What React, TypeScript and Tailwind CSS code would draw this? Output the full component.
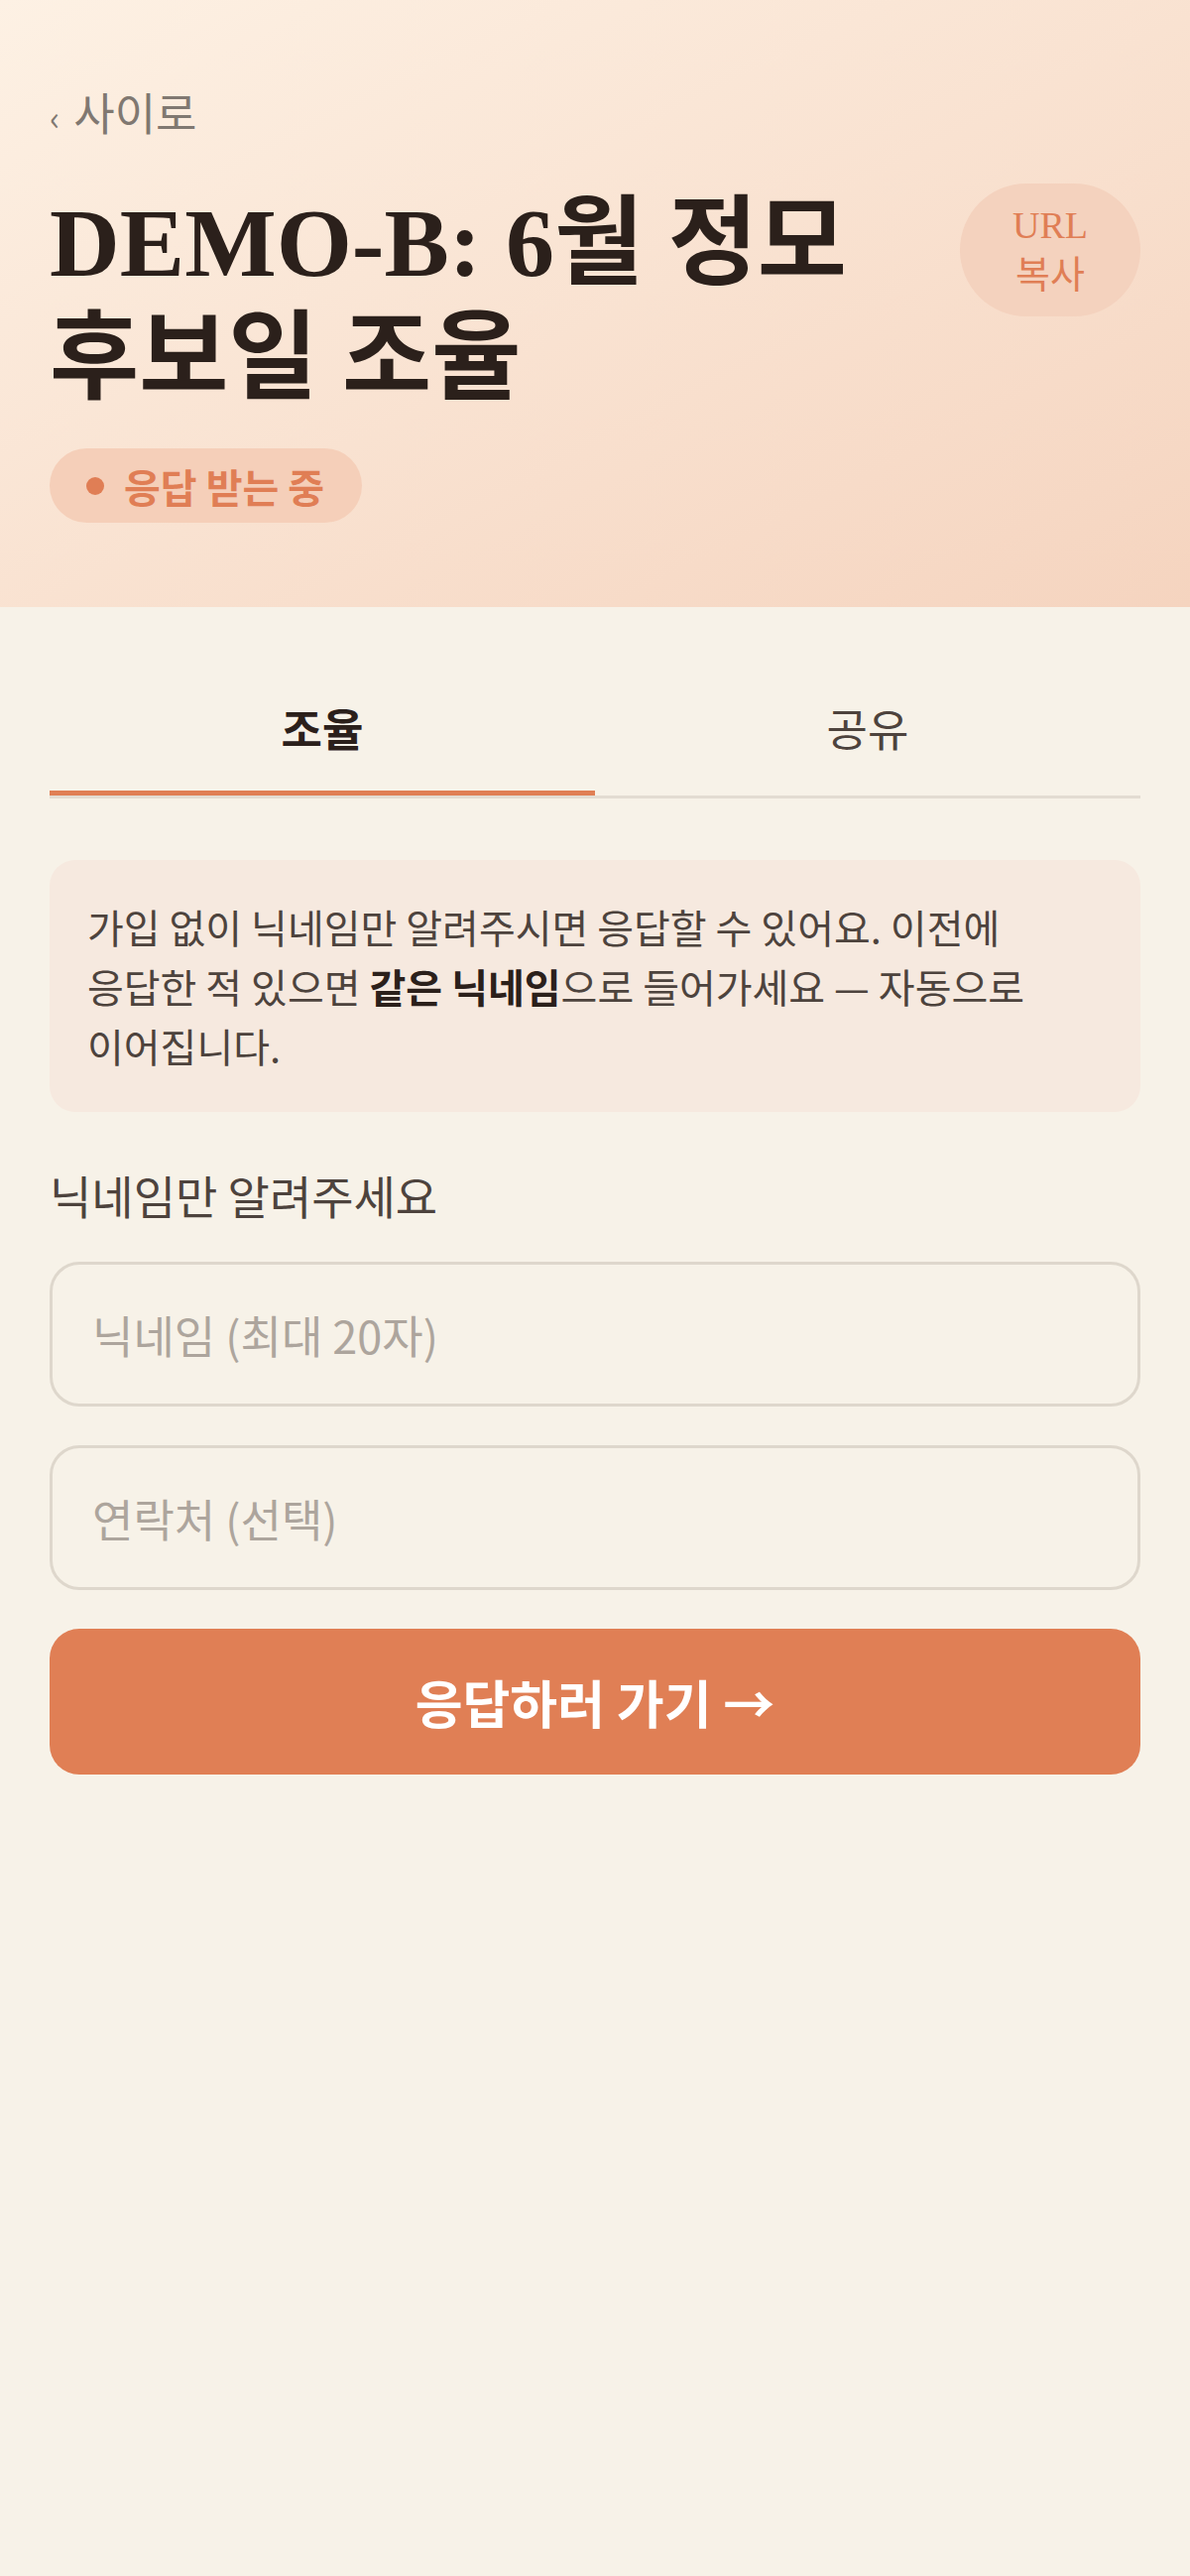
import { useState } from "react";

const serif = "font-['Liberation_Serif','Noto_Sans_CJK_KR',serif]";
const sans = "font-['Noto_Sans_CJK_KR','Noto_Sans',sans-serif]";

export default function App() {
  const [tab, setTab] = useState<"schedule" | "share">("schedule");
  const [nickname, setNickname] = useState("");
  const [contact, setContact] = useState("");

  return (
    <div className={`min-h-screen bg-[#f7f2e8] ${sans}`}>
      {/* header */}
      <header className="bg-linear-to-br from-[#fdf1e4] to-[#f5d4bf] px-[50px] pt-[85px] pb-[85px]">
        <a href="#" className="flex items-center gap-[14px] text-[45px] leading-[56px] text-[#807871]">
          <span className="mt-[10px] text-[34px] leading-none">‹</span>
          <span>사이로</span>
        </a>

        <div className="mt-[46px] flex items-start justify-between gap-[40px]">
          <h1 className={`${serif} text-[98px] font-bold leading-[116px] text-[#2b201b] break-keep`}>
            DEMO-B: 6월 정모 후보일 조율
          </h1>
          <button className={`${serif} mt-[-2px] flex h-[134px] w-[182px] shrink-0 items-center justify-center rounded-full bg-[#f4d2be] px-[40px] text-center text-[38px] leading-[50px] text-[#e07e55]`}>
            URL 복사
          </button>
        </div>

        <div className="mt-[33px] inline-flex h-[75px] items-center gap-[20px] rounded-full bg-[#f5cfb9] pl-[37px] pr-[38px]">
          <span className="h-[18px] w-[18px] rounded-full bg-[#e07e55]" />
          <span className="text-[40px] font-bold text-[#e07e55]">응답 받는 중</span>
        </div>
      </header>

      <main className="px-[50px] pt-[97px] pb-[80px]">
        {/* tabs */}
        <div className="grid grid-cols-2 border-b-[3px] border-[#e3dcd2]">
          <button
            onClick={() => setTab("schedule")}
            className={`border-b-[5px] pb-[38px] text-[45px] leading-[50px] ${
              tab === "schedule" ? "border-[#e07f55] font-bold text-[#2b201b]" : "border-transparent text-[#4d433d]"
            }`}
          >
            조율
          </button>
          <button
            onClick={() => setTab("share")}
            className={`border-b-[5px] pb-[38px] text-[45px] leading-[50px] ${
              tab === "share" ? "border-[#e07f55] font-bold text-[#2b201b]" : "border-transparent text-[#4d433d]"
            }`}
          >
            공유
          </button>
        </div>

        <div className="mt-[62px] rounded-[26px] bg-[#f6e9df] py-[37px] pl-[38px] pr-[70px] text-[40px] leading-[60px] text-[#4d433d] break-keep">
          <p>
            가입 없이 닉네임만 알려주시면 응답할 수 있어요. 이전에 응답한 적 있으면{" "}
            <b className="font-bold text-[#2b201b]">같은 닉네임</b>으로 들어가세요 — 자동으로 이어집니다.
          </p>
        </div>

        <p className="mt-[58px] text-[46px] leading-[50px] text-[#4d433d]">닉네임만 알려주세요</p>

        <input
          value={nickname}
          onChange={(e) => setNickname(e.target.value)}
          maxLength={20}
          placeholder="닉네임 (최대 20자)"
          className="mt-[43px] block h-[146px] w-full rounded-[30px] border-[3px] border-[#ded7cc] bg-transparent px-[40px] text-[45px] text-[#2b201b] outline-none placeholder:text-[#ada59d]"
        />
        <input
          value={contact}
          onChange={(e) => setContact(e.target.value)}
          placeholder="연락처 (선택)"
          className="mt-[39px] block h-[146px] w-full rounded-[30px] border-[3px] border-[#ded7cc] bg-transparent px-[40px] text-[45px] text-[#2b201b] outline-none placeholder:text-[#ada59d]"
        />

        <button className="mt-[39px] flex h-[147px] w-full items-center justify-center rounded-[30px] bg-[#e07f55] text-[52px] font-bold text-white">
          응답하러 가기 →
        </button>
      </main>
    </div>
  );
}
